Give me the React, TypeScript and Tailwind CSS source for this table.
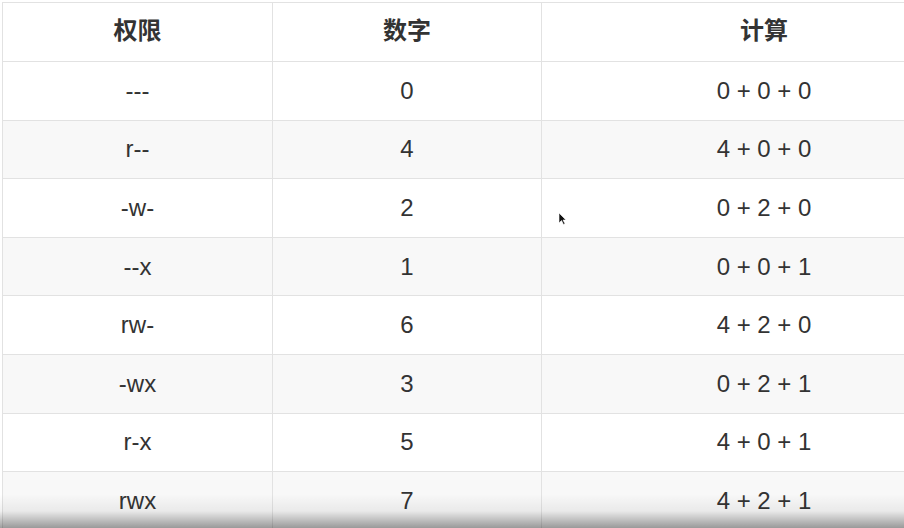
import React from "react";

const rows = [
  ["---", "0", "0 + 0 + 0"],
  ["r--", "4", "4 + 0 + 0"],
  ["-w-", "2", "0 + 2 + 0"],
  ["--x", "1", "0 + 0 + 1"],
  ["rw-", "6", "4 + 2 + 0"],
  ["-wx", "3", "0 + 2 + 1"],
  ["r-x", "5", "4 + 0 + 1"],
  ["rwx", "7", "4 + 2 + 1"],
];

const App = () => {
  return (
    <div className="relative h-[528px] w-[904px] overflow-hidden bg-white">
      <div className="pl-[2px] pt-[2px]">
        <table className="w-[984px] table-fixed border-collapse font-['Liberation_Sans','Noto_Sans_CJK_SC',sans-serif] text-[#333]">
          <colgroup>
            <col className="w-[270px]" />
            <col className="w-[269px]" />
            <col className="w-[445px]" />
          </colgroup>
          <thead>
            <tr className="h-[59px]">
              {["权限", "数字", "计算"].map((h) => (
                <th
                  key={h}
                  className="border border-[#e2e2e2] pb-[6px] text-center font-['Noto_Sans_CJK_SC',sans-serif] text-[24px] font-bold"
                >
                  {h}
                </th>
              ))}
            </tr>
          </thead>
          <tbody>
            {rows.map((r, i) => (
              <tr key={i} className={i % 2 === 1 ? "h-[58.6px] bg-[#f8f8f8]" : "h-[58.6px] bg-white"}>
                {r.map((c, j) => (
                  <td key={j} className="border border-[#e2e2e2] text-center text-[24px]">
                    {c}
                  </td>
                ))}
              </tr>
            ))}
          </tbody>
        </table>
      </div>

      {/* mouse pointer */}
      <svg className="absolute left-[558px] top-[212px]" width="9" height="14" viewBox="0 0 9 14">
        <path d="M1 1 L1 11 L3.5 8.5 L5.5 12.5 L7 11.8 L5 8 L8 8 Z" fill="#111" stroke="#fff" strokeWidth="0.6" />
      </svg>

      {/* video shading at the bottom */}
      <div className="pointer-events-none absolute bottom-0 left-0 h-[34px] w-full bg-gradient-to-b from-transparent via-[rgba(0,0,0,0.06)] to-[rgba(0,0,0,0.38)]" />
    </div>
  );
};

export default App;
